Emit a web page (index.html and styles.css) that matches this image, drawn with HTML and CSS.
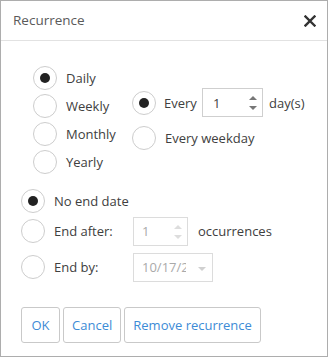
FILE: index.html
```html
<!DOCTYPE html>
<html>
<head>
<meta charset="utf-8">
<link rel="stylesheet" href="styles.css">
</head>
<body>
<div class="dialog">
  <div class="header">
    <span class="title">Recurrence</span>
    <svg class="close" width="12" height="12" viewBox="0 0 12 12"><path d="M1.5 1.5 L10.5 10.5 M10.5 1.5 L1.5 10.5" stroke="#333" stroke-width="2.4" stroke-linecap="square"/></svg>
  </div>
  <div class="content">
    <div class="freq">
      <div class="freq-types">
        <div class="row r28"><span class="radio checked"></span><span class="lbl">Daily</span></div>
        <div class="row r28"><span class="radio"></span><span class="lbl">Weekly</span></div>
        <div class="row r28"><span class="radio"></span><span class="lbl">Monthly</span></div>
        <div class="row r28"><span class="radio"></span><span class="lbl">Yearly</span></div>
      </div>
      <div class="freq-opts">
        <div class="row r30"><span class="radio checked"></span><span class="lbl every">Every</span>
          <div class="box spin"><span class="val">1</span><span class="arrows"><span class="up"></span><span class="down"></span></span></div>
          <span class="lbl unit">day(s)</span>
        </div>
        <div class="row r30"><span class="radio"></span><span class="lbl">Every weekday</span></div>
      </div>
    </div>
    <div class="ends">
      <div class="row r26"><span class="radio checked"></span><span class="lbl">No end date</span></div>
      <div class="row r30 m2"><span class="radio"></span><span class="lbl endlbl">End after:</span>
        <div class="box spin small disabled"><span class="val">1</span><span class="arrows"><span class="up"></span><span class="down"></span></span></div>
        <span class="lbl occ">occurrences</span>
      </div>
      <div class="row r30 m6"><span class="radio"></span><span class="lbl endlbl">End by:</span>
        <div class="box date disabled"><span class="val dval">10/17/2018</span><span class="drop"></span></div>
      </div>
    </div>
    <div class="buttons">
      <span class="btn ok">OK</span>
      <span class="btn">Cancel</span>
      <span class="btn">Remove recurrence</span>
    </div>
  </div>
</div>
</body>
</html>
```
FILE: styles.css
```css
html, body { margin: 0; padding: 0; background: #fff; }
body { font-family: "Open Sans", "Noto Sans", sans-serif; font-size: 13px; color: #404040; }
.dialog {
  width: 328px; height: 357px; box-sizing: border-box;
  border: 1px solid #adadad; background: #fff;
}
.header {
  height: 38px; border-bottom: 1px solid #e2e2e2;
  display: flex; align-items: center; justify-content: space-between;
  padding: 0 11px 1px 12px;
}
.title { font-size: 13.5px; color: #5a5a5a; }
.close { display: block; margin-top: 1px; }
.content { padding: 23px 0 0 20px; }
.freq { display: flex; align-items: center; padding-left: 12px; }
.freq-types { width: 99px; display: flex; flex-direction: column; }
.freq-opts { display: flex; flex-direction: column; gap: 5px; }
.row { display: flex; align-items: center; }
.r28 { height: 28px; }
.r30 { height: 30px; }
.r26 { height: 26px; }
.ends { margin-top: 12px; display: flex; flex-direction: column; }
.m2 { margin-top: 2px; }
.m6 { margin-top: 6px; }
.radio {
  width: 24px; height: 24px; box-sizing: border-box; border: 1px solid #cdcdcd;
  border-radius: 50%; background: #fff; flex: none; position: relative;
}
.radio.checked::after {
  content: ""; position: absolute; left: 6px; top: 6px; width: 10px; height: 10px;
  border-radius: 50%; background: #222;
}
.lbl { margin-left: 9px; white-space: nowrap; }
.every { margin-left: 8px; width: 38px; }
.box {
  height: 29px; box-sizing: border-box; border: 1px solid #cfcfcf; display: flex;
  align-items: center; position: relative; overflow: hidden;
}
.spin { width: 61px; padding-left: 10px; }
.spin.small { width: 55px; padding-left: 8px; }
.val { flex: 1; }
.arrows { width: 14px; height: 100%; position: relative; flex: none; margin-right: 2px; }
.up, .down { position: absolute; left: 3px; width: 0; height: 0; border-left: 4px solid transparent; border-right: 4px solid transparent; }
.up { top: 7px; border-bottom: 4px solid #777; }
.down { bottom: 6px; border-top: 4px solid #777; }
.disabled { border-color: #dcdcdc; color: #aaa; }
.disabled .up { border-bottom-color: #ddd; }
.disabled .down { border-top-color: #ddd; }
.unit { margin-left: 6px; }
.endlbl { width: 79px; }
.occ { margin-left: 10px; }
.date { width: 80px; padding-left: 8px; }
.dval { flex: none; width: 44px; overflow: hidden; white-space: nowrap; }
.drop {
  position: absolute; right: 6px; top: 13px; width: 0; height: 0;
  border-left: 4px solid transparent; border-right: 4px solid transparent; border-top: 4px solid #d0d0d0;
}
.buttons { margin-top: 25px; display: flex; gap: 3px; }
.btn {
  height: 36px; box-sizing: border-box; border: 1px solid #c9c9c9; border-radius: 3px;
  display: flex; align-items: center; padding: 0 8px; color: #3d8bd6; font-size: 13px;
}
.btn.ok { padding: 0 9.5px; }
```
